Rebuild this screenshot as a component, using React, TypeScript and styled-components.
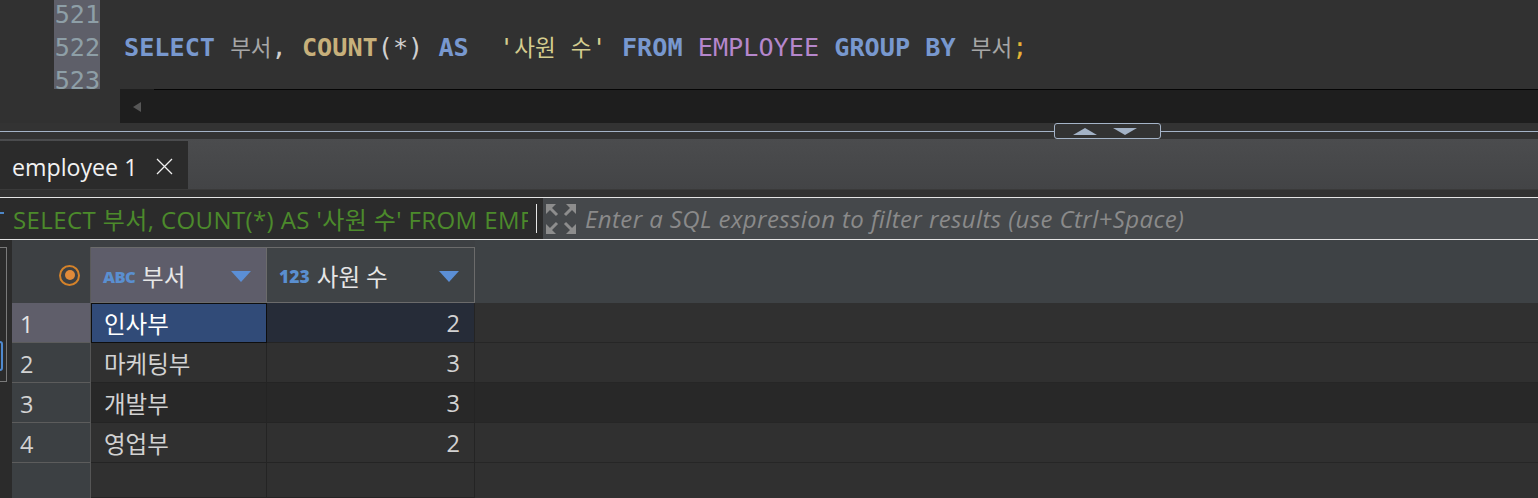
import styled, { createGlobalStyle } from "styled-components";

const GlobalStyle = createGlobalStyle`
  html, body {
    margin: 0;
    padding: 0;
  }
  body {
    background: #313131;
    overflow: hidden;
    font-family: "Open Sans", "Noto Sans CJK KR", sans-serif;
  }
`;

const MONO = `"DejaVu Sans Mono", monospace`;
const KO = `"Noto Sans CJK KR", sans-serif`;

const C = {
  kw: "#7898cf",
  ident: "#a6a6a6",
  fn: "#c7b07b",
  punct: "#cfcfcf",
  str: "#d4cc8f",
  table: "#b587cc",
  semi: "#e6b236",
};

type Row = { no: number; dept: string; count: number };

const rows: Row[] = [
  { no: 1, dept: "인사부", count: 2 },
  { no: 2, dept: "마케팅부", count: 3 },
  { no: 3, dept: "개발부", count: 3 },
  { no: 4, dept: "영업부", count: 2 },
];

function App() {
  return (
    <Page>
      <GlobalStyle />
      <Editor>
        <LinesArea>
          <Gutter>
            <LineNo>521</LineNo>
            <LineNo>522</LineNo>
            <LineNo>523</LineNo>
          </Gutter>
          <Code>
            <CodeLine />
            <CodeLine>
              <Tok $c={C.kw} $b>SELECT</Tok>{" "}
              <Ko $c={C.ident}>부서</Ko>
              <Tok $c={C.punct}>, </Tok>
              <Tok $c={C.fn} $b>COUNT</Tok>
              <Tok $c={C.punct}>(*) </Tok>
              <Tok $c={C.kw} $b>AS</Tok>
              {"  "}
              <Tok $c={C.str}>'</Tok>
              <Ko $c={C.str}>사원</Ko>
              <Tok $c={C.str}> </Tok>
              <Ko $c={C.str}>수</Ko>
              <Tok $c={C.str}>'</Tok>{" "}
              <Tok $c={C.kw} $b>FROM</Tok>{" "}
              <Tok $c={C.table}>EMPLOYEE</Tok>{" "}
              <Tok $c={C.kw} $b>GROUP BY</Tok>{" "}
              <Ko $c={C.ident}>부서</Ko>
              <Tok $c={C.semi}>;</Tok>
            </CodeLine>
            <CodeLine />
          </Code>
        </LinesArea>
        <HScroll>
          <HScrollEdge />
          <HScrollBody>
            <ArrowLeft />
          </HScrollBody>
        </HScroll>
      </Editor>

      <Sash>
        <SashLine $w={1054} />
        <SashGrip>
          <Tri $dir="up" />
          <Tri $dir="down" />
        </SashGrip>
        <SashLine />
      </Sash>

      <TabBar>
        <Tab>
          <TabLabel>employee 1</TabLabel>
          <svg width="17" height="17" viewBox="0 0 17 17">
            <path d="M1 1 L16 16 M16 1 L1 16" stroke="#f0f0f0" strokeWidth="1.3" />
          </svg>
        </Tab>
      </TabBar>

      <FilterBar>
        <QueryBox>
          <HistoryIcon width="14" height="16" viewBox="0 0 14 16">
            <path d="M2 13 V5 Q2 2 6 2 H13" stroke="#4d86c6" strokeWidth="2" fill="none" />
          </HistoryIcon>
          <QueryText>SELECT 부서, COUNT(*) AS '사원 수' FROM EMPLOYEE GROUP BY 부서</QueryText>
          <Caret />
        </QueryBox>
        <FilterInput>
          <svg width="30" height="30" viewBox="0 0 30 30">
            <g fill="#8d8d8d">
              <polygon points="0,0 10,0 0,10" />
              <polygon points="30,0 20,0 30,10" />
              <polygon points="0,30 10,30 0,20" />
              <polygon points="30,30 20,30 30,20" />
            </g>
            <g stroke="#8d8d8d" strokeWidth="3">
              <path d="M3 3 L11 11 M27 3 L19 11 M3 27 L11 19 M27 27 L19 19" />
            </g>
          </svg>
          <Placeholder>Enter a SQL expression to filter results (use Ctrl+Space)</Placeholder>
        </FilterInput>
      </FilterBar>

      <Results>
        <SideStrip>
          <SidePanel>
            <SideMarker />
          </SidePanel>
        </SideStrip>
        <Table>
          <HeadSlot>
            <Corner>
              <Radio />
            </Corner>
          </HeadSlot>
          <HeadSlot>
            <HeadBox $selected>
              <TypeTag $tight>ABC</TypeTag>
              <HeadLabel>부서</HeadLabel>
              <SortArrow />
            </HeadBox>
          </HeadSlot>
          <HeadSlot>
            <HeadBox>
              <TypeTag>123</TypeTag>
              <HeadLabel>사원 수</HeadLabel>
              <SortArrow />
            </HeadBox>
          </HeadSlot>
          <HeadRest />

          {rows.map((r) => (
            <RowCells key={r.no} row={r} />
          ))}

          <RowHead $last />
          <Cell />
          <Cell />
          <RestCell $last />
        </Table>
      </Results>
    </Page>
  );
}

function RowCells({ row }: { row: Row }) {
  const selected = row.no === 1;
  const dark = row.no === 3;
  return (
    <>
      <RowHead $selected={selected}>{row.no}</RowHead>
      {selected ? (
        <SelectedCell>{row.dept}</SelectedCell>
      ) : (
        <Cell $dark={dark}>{row.dept}</Cell>
      )}
      <Cell $dark={dark} $num $tint={selected}>
        {row.count}
      </Cell>
      <RestCell $dark={dark} />
    </>
  );
}

export default App;

const Page = styled.div`
  width: 1538px;
  height: 498px;
  display: flex;
  flex-direction: column;
  overflow: hidden;
`;

/* ---------- editor ---------- */

const Editor = styled.div`
  height: 123px;
  background: #313131;
  display: flex;
  flex-direction: column;
`;

const LinesArea = styled.div`
  height: 89px;
  display: flex;
  padding-left: 54px;
  overflow: hidden;
`;

const Gutter = styled.div`
  width: 46px;
  background: #5e5f69;
`;

const LineNo = styled.div`
  height: 33px;
  line-height: 33px;
  text-align: right;
  font-family: ${MONO};
  font-size: 25.1px;
  color: #8e9fa7;
  &:first-child {
    margin-top: -2px;
  }
`;

const Code = styled.div`
  margin-left: 24px;
`;

const CodeLine = styled.div`
  height: 33px;
  line-height: 33px;
  white-space: pre;
  font-family: ${MONO};
  font-size: 25.2px;
  color: ${C.punct};
  &:first-child {
    margin-top: -2px;
  }
`;

const Tok = styled.span<{ $c: string; $b?: boolean }>`
  color: ${(p) => p.$c};
  font-weight: ${(p) => (p.$b ? 700 : 400)};
`;

const Ko = styled.span<{ $c: string }>`
  font-family: ${KO};
  font-size: 22.5px;
  line-height: 1;
  color: ${(p) => p.$c};
`;

const HScroll = styled.div`
  height: 34px;
  margin-left: 120px;
  background: #1e1e1e;
  display: flex;
  flex-direction: column;
`;

const HScrollEdge = styled.div`
  height: 1px;
  margin-left: 34px;
  background: #050505;
`;

const HScrollBody = styled.div`
  flex: 1;
  display: flex;
  align-items: center;
  padding-left: 13px;
`;

const ArrowLeft = styled.div`
  width: 0;
  height: 0;
  border-top: 5px solid transparent;
  border-bottom: 5px solid transparent;
  border-right: 8px solid #575757;
`;

/* ---------- sash ---------- */

const Sash = styled.div`
  height: 16px;
  background: #333333;
  display: flex;
  align-items: center;
`;

const SashLine = styled.div<{ $w?: number }>`
  height: 1px;
  background: #a5b4c8;
  flex: ${(p) => (p.$w ? `0 0 ${p.$w}px` : "1")};
`;

const SashGrip = styled.div`
  width: 107px;
  height: 16px;
  box-sizing: border-box;
  border: 1px solid #a5b4c8;
  border-radius: 3px;
  display: flex;
  align-items: center;
  gap: 16px;
  padding-left: 18px;
`;

const Tri = styled.div<{ $dir: "up" | "down" }>`
  width: 0;
  height: 0;
  border-left: 12px solid transparent;
  border-right: 12px solid transparent;
  ${(p) =>
    p.$dir === "up"
      ? "border-bottom: 7px solid #a3b2c6;"
      : "border-top: 7px solid #a3b2c6;"}
`;

/* ---------- tabs ---------- */

const TabBar = styled.div`
  height: 51px;
  box-sizing: border-box;
  background: linear-gradient(#4b4c4e, #434446);
  border-bottom: 1px solid #3a3a3a;
  display: flex;
  align-items: flex-end;
`;

const Tab = styled.div`
  width: 188px;
  height: 48px;
  box-sizing: border-box;
  background: #2b2b2b;
  display: flex;
  align-items: center;
  padding: 3px 0 0 12px;
  gap: 19px;
`;

const TabLabel = styled.span`
  font-size: 23.2px;
  color: #f2f2f2;
`;

/* ---------- filter ---------- */

const FilterBar = styled.div`
  margin-top: 7px;
  height: 43px;
  box-sizing: border-box;
  border-top: 1px solid #e4e4e4;
  border-bottom: 1px solid #e4e4e4;
  display: flex;
  background: #333333;
`;

const QueryBox = styled.div`
  width: 543px;
  background: #2b2b2b;
  display: flex;
  align-items: center;
  overflow: hidden;
`;

const HistoryIcon = styled.svg`
  margin-left: -9px;
  flex: none;
`;

const QueryText = styled.div`
  width: 515px;
  margin-left: 8px;
  overflow: hidden;
  white-space: nowrap;
  font-size: 24px;
  letter-spacing: 0.4px;
  color: #4c8a2b;
`;

const Caret = styled.div`
  width: 1px;
  height: 29px;
  margin-left: 8px;
  background: #e6e6e6;
  flex: none;
`;

const FilterInput = styled.div`
  flex: 1;
  background: #45484b;
  display: flex;
  align-items: center;
  padding-left: 3px;
  gap: 9px;
`;

const Placeholder = styled.span`
  font-size: 24px;
  letter-spacing: 0.4px;
  font-style: italic;
  color: #8a8a8a;
  white-space: nowrap;
`;

/* ---------- results grid ---------- */

const Results = styled.div`
  flex: 1;
  display: flex;
  background: #303030;
`;

const SideStrip = styled.div`
  width: 12px;
  background: #2b2b2b;
`;

const SidePanel = styled.div`
  margin: 7px 0 0 -1px;
  width: 8px;
  height: 135px;
  box-sizing: border-box;
  border: 1px solid #7a7a7a;
  display: flex;
  flex-direction: column;
  justify-content: flex-end;
  padding-bottom: 10px;
`;

const SideMarker = styled.div`
  margin-left: -5px;
  width: 8px;
  height: 30px;
  box-sizing: border-box;
  border: 2px solid #4f8ad0;
  border-radius: 3px;
`;

const Table = styled.div`
  flex: 1;
  display: grid;
  grid-template-columns: 79px 176px 208px 1fr;
  grid-template-rows: 63px repeat(4, 40px) 1fr;
  font-size: 23.5px;
  color: #d2d2d2;
`;

const HeadSlot = styled.div`
  background: #3d4043;
  padding-top: 7px;
  display: flex;
`;

const Corner = styled.div`
  flex: 1;
  border-right: 1px solid #5a5a5a;
  display: flex;
  align-items: center;
  justify-content: flex-end;
  padding-right: 10px;
`;

const Radio = styled.div`
  width: 21px;
  height: 21px;
  box-sizing: border-box;
  border: 2.5px solid #d4822a;
  border-radius: 50%;
  display: flex;
  align-items: center;
  justify-content: center;
  &::after {
    content: "";
    width: 10px;
    height: 10px;
    border-radius: 50%;
    background: #e08a3a;
  }
`;

const HeadBox = styled.div<{ $selected?: boolean }>`
  flex: 1;
  box-sizing: border-box;
  background: ${(p) => (p.$selected ? "#5e5d6a" : "#3f4346")};
  border-top: 1px solid #6b6b6b;
  border-bottom: 1px solid #6b6b6b;
  border-right: 1px solid #6b6b6b;
  display: flex;
  align-items: center;
  padding: 2px 15px 0 12px;
`;

const TypeTag = styled.span<{ $tight?: boolean }>`
  font-size: ${(p) => (p.$tight ? "16.5px" : "17.5px")};
  font-weight: 800;
  letter-spacing: ${(p) => (p.$tight ? "-0.6px" : "0")};
  color: #5a8fd0;
  margin-right: 7px;
`;

const HeadLabel = styled.span`
  font-size: 23.5px;
  color: #e6e6e6;
`;

const SortArrow = styled.div`
  margin-left: auto;
  width: 0;
  height: 0;
  border-left: 10px solid transparent;
  border-right: 10px solid transparent;
  border-top: 11px solid #5b8fd6;
`;

const HeadRest = styled.div`
  background: #3e4245;
`;

const RowHead = styled.div<{ $selected?: boolean; $last?: boolean }>`
  background: ${(p) => (p.$selected ? "#5f5e6a" : "#3c4043")};
  color: ${(p) => (p.$selected ? "#e4e4e4" : "#d2d2d2")};
  border-bottom: ${(p) => (p.$last ? "none" : "1px solid #5c5c5c")};
  border-right: 1px solid #555555;
  display: flex;
  align-items: center;
  padding: 3px 0 0 8px;
`;

const Cell = styled.div<{ $dark?: boolean; $num?: boolean; $tint?: boolean }>`
  background: ${(p) => (p.$tint ? "#262c38" : p.$dark ? "#282828" : "#303030")};
  border-right: 1px solid #242424;
  border-bottom: 1px solid #242424;
  display: flex;
  align-items: center;
  justify-content: ${(p) => (p.$num ? "flex-end" : "flex-start")};
  padding: ${(p) => (p.$num ? "0 14px 0 0" : "0 0 0 13px")};
`;

const SelectedCell = styled.div`
  background: #314b78;
  border: 1px solid #0e0e0e;
  color: #ffffff;
  display: flex;
  align-items: center;
  padding-left: 12px;
`;

const RestCell = styled.div<{ $dark?: boolean; $last?: boolean }>`
  background: ${(p) => (p.$dark ? "#282828" : "#303030")};
  border-bottom: ${(p) => (p.$last ? "none" : "1px solid #262626")};
`;
